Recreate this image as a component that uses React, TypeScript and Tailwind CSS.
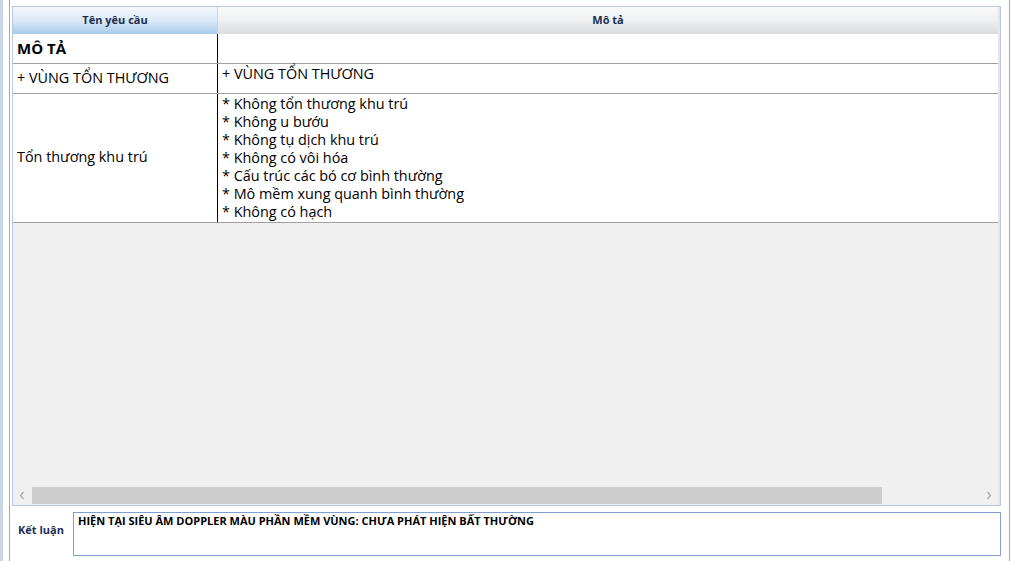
import React from "react";

const font = { fontFamily: '"Open Sans", "Noto Sans", sans-serif' };

export default function App() {
  const lines = [
    "* Không tổn thương khu trú",
    "* Không u bướu",
    "* Không tụ dịch khu trú",
    "* Không có vôi hóa",
    "* Cấu trúc các bó cơ bình thường",
    "* Mô mềm xung quanh bình thường",
    "* Không có hạch",
  ];
  return (
    <div className="w-[1015px] h-[561px] bg-white flex overflow-hidden text-black" style={font}>
      <div className="w-[3px] h-full bg-[#c9d6ea]" />
      <div className="ml-[6px] w-[1001px] h-full border-l border-r border-[#8eaad8] flex flex-col pl-[2px] pr-[8px]">
        {/* grid */}
        <div className="mt-[6px] h-[500px] border border-[#b7c8e2] flex bg-[#f0f0f0]">
          <div className="flex-1 flex flex-col">
            {/* header */}
            <div className="h-[27px] flex">
              <div className="w-[204px] bg-gradient-to-b from-[#f5f9fd] via-[#dbe9f7] to-[#a9c9eb] flex items-center justify-center text-[11px] font-bold text-[#1c2f52]">
                Tên yêu cầu
              </div>
              <div className="w-[1px] bg-[#c9d5e4]" />
              <div className="flex-1 bg-gradient-to-b from-[#fafafa] via-[#eef0f1] to-[#d9dde1] flex items-center justify-center text-[11px] font-bold text-[#1c2f52]">
                Mô tả
              </div>
            </div>
            {/* row 1 */}
            <div className="h-[30px] flex border-b border-[#a0a0a0] bg-white">
              <div className="w-[204px] flex items-center pl-[4px] text-[15px] font-bold">MÔ TẢ</div>
              <div className="w-[1px] bg-black" />
              <div className="flex-1" />
            </div>
            {/* row 2 */}
            <div className="h-[30px] flex border-b border-[#a0a0a0] bg-white">
              <div className="w-[204px] flex items-center pl-[4px] text-[14.4px] pb-[2px]">+ VÙNG TỔN THƯƠNG</div>
              <div className="w-[1px] bg-black" />
              <div className="flex-1 pl-[4px] text-[14.4px] leading-[18px] pt-[1px]">+ VÙNG TỔN THƯƠNG</div>
            </div>
            {/* row 3 */}
            <div className="h-[129px] flex border-b border-[#a0a0a0] bg-white">
              <div className="w-[204px] flex items-center pl-[4px] text-[14.4px] pb-[2px]">Tổn thương khu trú</div>
              <div className="w-[1px] bg-black" />
              <div className="flex-1 pl-[4px] text-[14.4px] leading-[18px] pt-[1px] flex flex-col">
                {lines.map((l) => (
                  <div key={l}>{l}</div>
                ))}
              </div>
            </div>
            <div className="flex-1" />
            {/* horizontal scrollbar */}
            <div className="h-[17px] mb-[1px] flex items-stretch">
              <div className="w-[18px] flex items-center justify-center">
                <svg width="6" height="9" viewBox="0 0 6 9">
                  <path d="M4.5 1 L1.5 4.5 L4.5 8" fill="none" stroke="#a6a6a6" strokeWidth="1.2" />
                </svg>
              </div>
              <div className="w-[1px]" />
              <div className="w-[850px] bg-[#cdcdcd]" />
              <div className="flex-1" />
              <div className="w-[18px] flex items-center justify-center">
                <svg width="6" height="9" viewBox="0 0 6 9">
                  <path d="M1.5 1 L4.5 4.5 L1.5 8" fill="none" stroke="#a6a6a6" strokeWidth="1.2" />
                </svg>
              </div>
            </div>
          </div>
          <div className="w-[2px] bg-[#e6e6e6]" />
        </div>
        {/* conclusion */}
        <div className="mt-[6px] flex">
          <div className="w-[61px] pl-[6px] pt-[10px] text-[11px] font-bold text-[#1c2f52]">Kết luận</div>
          <div className="flex-1 h-[44px] border border-[#7f9fd3] bg-white pl-[4px] text-[11px] font-bold">
            HIỆN TẠI SIÊU ÂM DOPPLER MÀU PHẦN MỀM VÙNG: CHƯA PHÁT HIỆN BẤT THƯỜNG
          </div>
        </div>
      </div>
    </div>
  );
}
